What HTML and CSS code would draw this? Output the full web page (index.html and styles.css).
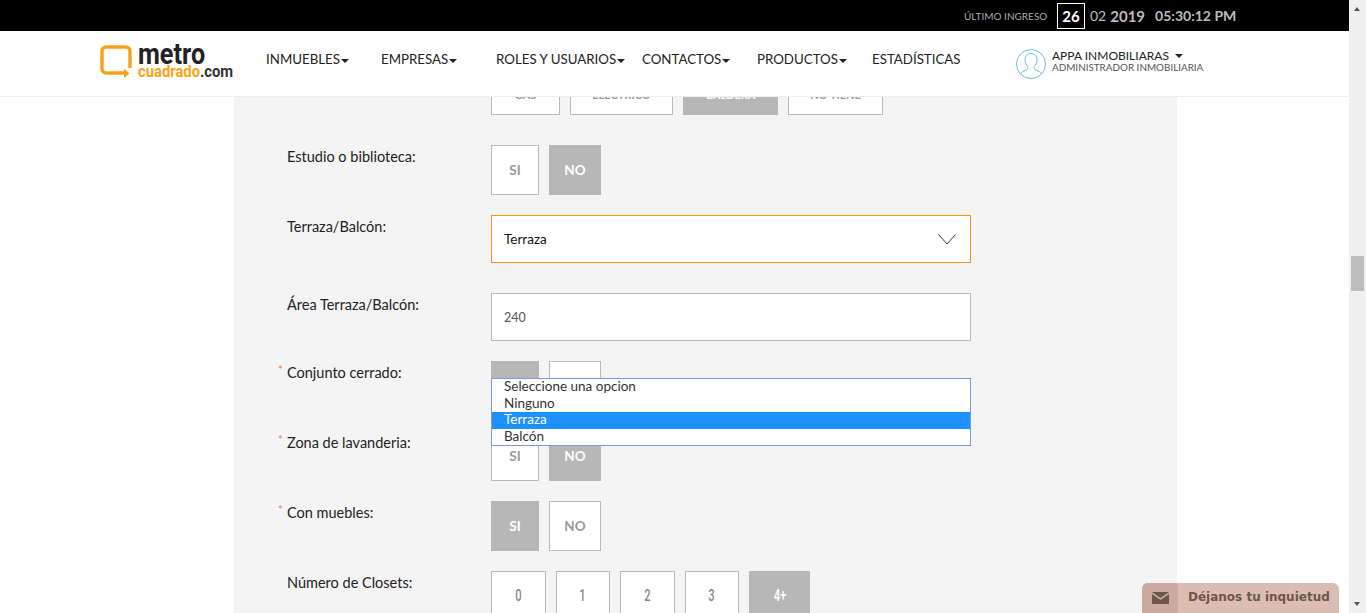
FILE: index.html
```html
<!DOCTYPE html>
<html lang="es">
<head>
    <meta charset="UTF-8">
    <title>Metro Cuadrado</title>
    <link rel="stylesheet" href="styles.css">
</head>
<body>
    <div class="page">
        <div class="topbar">
            <span class="last-label">ÚLTIMO INGRESO</span>
            <span class="day">26</span>
            <span class="month">02</span>
            <span class="year">2019</span>
            <span class="time">05:30:12 PM</span>
        </div>

        <header class="header">
            <a class="logo">
                <svg class="logo-mark" width="33" height="33" viewBox="0 0 33 33">
                    <path d="M3 24V6a4 4 0 0 1 4-4h20a4 4 0 0 1 4 4v17" fill="none" stroke="#f9a11b" stroke-width="3.4"/>
                    <path d="M3 24a4 4 0 0 0 4 4h20" fill="none" stroke="#f9a11b" stroke-width="3.4"/>
                    <path d="M25 23.500l5.500 5-5.500 4.500z" fill="#f9a11b"/>
                </svg>
                <span class="logo-text">
                    <span class="logo-metro">metro</span>
                    <span class="logo-sub"><span class="logo-cuadrado">cuadrado</span>.com</span>
                </span>
            </a>
            <nav class="nav">
                <a>INMUEBLES<i class="caret"></i></a>
                <a>EMPRESAS<i class="caret"></i></a>
                <a>ROLES Y USUARIOS<i class="caret"></i></a>
                <a>CONTACTOS<i class="caret"></i></a>
                <a>PRODUCTOS<i class="caret"></i></a>
                <a>ESTADÍSTICAS</a>
            </nav>
            <div class="user">
                <svg width="32" height="32" viewBox="0 0 32 32" fill="none" stroke="#6dbbdd" stroke-width="1">
                    <circle cx="16" cy="16" r="14.500"/>
                    <path d="M5.500 26c1-2.500 3.500-3 6-4 1.500-.6 1.800-2 1-3.500-1.500-2-2.500-4-2.500-7 0-3.500 2.500-6 6-6s6 2.500 6 6c0 3-1 5-2.500 7-.8 1.500-.5 2.900 1 3.500 2.500 1 5 1.500 6 4"/>
                </svg>
                <div class="user-text">
                    <div class="user-name">APPA INMOBILIARAS<i class="caret caret-user"></i></div>
                    <div class="user-role">ADMINISTRADOR INMOBILIARIA</div>
                </div>
            </div>
        </header>

        <main class="main">
            <section class="panel">
                <div class="row row-cut">
                    <div class="label"></div>
                    <div class="options">
                        <span class="opt opt-gas">GAS</span>
                        <span class="opt opt-electrico">ELECTRICO</span>
                        <span class="opt opt-caldera active">CALDERA</span>
                        <span class="opt opt-notiene">NO TIENE</span>
                    </div>
                </div>

                <div class="row">
                    <div class="label">Estudio o biblioteca:</div>
                    <div class="options">
                        <span class="opt opt-si">SI</span>
                        <span class="opt opt-no active">NO</span>
                    </div>
                </div>

                <div class="row row-wide">
                    <div class="label">Terraza/Balcón:</div>
                    <div class="select">
                        <span>Terraza</span>
                        <svg width="18" height="11" viewBox="0 0 18 11" fill="none" stroke="#333" stroke-width="1">
                            <path d="M.5.500 9 10 17.500.500"/>
                        </svg>
                    </div>
                </div>

                <div class="row">
                    <div class="label">Área Terraza/Balcón:</div>
                    <input class="field" type="text" value="240">
                </div>

                <div class="row">
                    <div class="label required">Conjunto cerrado:</div>
                    <div class="options">
                        <span class="opt opt-si active">SI</span>
                        <span class="opt opt-no">NO</span>
                        <ul class="dropdown">
                            <li>Seleccione una opcion</li>
                            <li>Ninguno</li>
                            <li class="selected">Terraza</li>
                            <li>Balcón</li>
                        </ul>
                    </div>
                </div>

                <div class="row">
                    <div class="label required">Zona de lavanderia:</div>
                    <div class="options">
                        <span class="opt opt-si">SI</span>
                        <span class="opt opt-no active">NO</span>
                    </div>
                </div>

                <div class="row">
                    <div class="label required">Con muebles:</div>
                    <div class="options">
                        <span class="opt opt-si active">SI</span>
                        <span class="opt opt-no">NO</span>
                    </div>
                </div>

                <div class="row">
                    <div class="label">Número de Closets:</div>
                    <div class="options numbers">
                        <span class="opt opt-n"><b>0</b></span>
                        <span class="opt opt-n"><b>1</b></span>
                        <span class="opt opt-n"><b>2</b></span>
                        <span class="opt opt-n"><b>3</b></span>
                        <span class="opt opt-more active"><b>4+</b></span>
                    </div>
                </div>
            </section>
        </main>
    </div>

    <div class="scrollbar">
        <span class="arrow-up"></span>
        <span class="thumb"></span>
        <span class="arrow-down"></span>
    </div>

    <div class="feedback">
        <span class="feedback-icon">
            <svg width="17" height="12" viewBox="0 0 17 12">
                <path d="M0 0h17L8.500 6z" fill="#6b5750"/>
                <path d="M0 2l8.500 6L17 2v10H0z" fill="#6b5750"/>
            </svg>
        </span>
        <span class="feedback-text">Déjanos tu inquietud</span>
    </div>
</body>
</html>
```

FILE: styles.css
```css
html, body {
    height: 100%;
}

body {
    margin: 0;
    display: flex;
    overflow: hidden;
    font-family: "Lato", "Liberation Sans", sans-serif;
    color: #222;
    background: #fff;
}

.page {
    flex: 1;
    min-width: 0;
    display: flex;
    flex-direction: column;
}

/* barra negra */
.topbar {
    height: 31px;
    flex: none;
    background: #000;
    color: #bbb;
    display: flex;
    align-items: center;
    padding-left: 964px;
    box-sizing: border-box;
}

.last-label {
    font-size: 10px;
    width: 93px;
    color: #aaa;
}

.day {
    width: 28px;
    height: 26px;
    box-sizing: border-box;
    border: 1px solid #fff;
    color: #fff;
    font-size: 15px;
    font-weight: 700;
    text-align: center;
    line-height: 24px;
    margin-right: 5px;
}

.month {
    font-size: 14px;
    margin-right: 4px;
}

.year {
    font-size: 15px;
    font-weight: 700;
    margin-right: 10px;
}

.time {
    font-size: 14px;
    font-weight: 700;
}

/* cabecera */
.header {
    height: 66px;
    flex: none;
    box-sizing: border-box;
    border-bottom: 1px solid #eee;
    display: flex;
    align-items: center;
    padding-left: 99px;
}

.logo {
    width: 167px;
    flex: none;
    display: flex;
    gap: 6px;
    align-items: center;
    margin-top: -5px;
}

.logo-text {
    display: flex;
    flex-direction: column;
    font-family: "Roboto", sans-serif;
    font-weight: 700;
    transform: scaleX(.87);
    transform-origin: left;
    white-space: nowrap;
}

.logo-metro {
    font-size: 29px;
    line-height: 20px;
    color: #222;
}

.logo-sub {
    font-size: 17px;
    line-height: 14px;
    color: #333;
}

.logo-cuadrado {
    color: #f9a11b;
}

.nav {
    display: grid;
    grid-template-columns: 115px 115px 146px 115px 115px 144px;
    font-size: 13.300px;
    margin-top: -9px;
}

.nav a {
    white-space: nowrap;
}

.caret {
    display: inline-block;
    margin-left: 1px;
    vertical-align: middle;
    border-top: 4px solid #222;
    border-left: 4px solid transparent;
    border-right: 4px solid transparent;
}

.user {
    display: flex;
    align-items: center;
    gap: 5px;
    margin-left: -1px;
}

.user-text {
    margin-top: -5px;
}

.user-name {
    font-size: 12px;
    line-height: 12px;
}

.caret-user {
    margin-left: 6px;
    vertical-align: 2px;
}

.user-role {
    font-size: 9.900px;
    line-height: 10px;
    color: #555;
}

/* formulario */
.main {
    flex: 1;
    min-height: 0;
    overflow: hidden;
    padding-left: 234px;
}

.panel {
    width: 943px;
    box-sizing: border-box;
    background: #f4f4f4;
    padding-left: 53px;
    height: 100%;
    overflow: hidden;
}

.row {
    display: flex;
    margin-bottom: 20px;
}

.row-cut {
    height: 18px;
    margin-bottom: 30px;
    align-items: flex-end;
    overflow: hidden;
}

.row-cut .opt {
    padding-top: 10px;
}

.row-wide {
    margin-bottom: 30px;
}

.label {
    width: 204px;
    flex: none;
    position: relative;
    font-size: 14.500px;
    line-height: 24px;
}

.required::before {
    content: "*";
    position: absolute;
    left: -9px;
    top: -3px;
    font-size: 11px;
    color: #f0764a;
}

.options {
    display: flex;
    gap: 10px;
    position: relative;
    flex: none;
}

.opt {
    height: 50px;
    box-sizing: border-box;
    border: 1px solid #b9b9b9;
    padding-bottom: 1px;
    background: #fff;
    color: #999;
    font-size: 13.500px;
    font-weight: 700;
    display: flex;
    align-items: center;
    justify-content: center;
}

.opt.active {
    background: #b7b7b7;
    border-color: #b7b7b7;
    color: #fff;
}

.opt-si { width: 48px; }
.opt-no { width: 52px; }
.opt-gas { width: 69px; font-size: 11px; }
.opt-electrico { width: 103px; font-size: 11px; }
.opt-caldera { width: 95px; font-size: 11px; }
.opt-notiene { width: 95px; font-size: 11px; }

.numbers .opt {
    font-family: "Roboto", sans-serif;
    font-size: 16px;
    color: #888;
}

.numbers .opt.active {
    color: #fff;
}

.numbers b {
    font-weight: 500;
    transform: scaleX(.7);
}

.opt-n { width: 54.500px; }
.opt-more { width: 61px; }

.select, .field {
    width: 480px;
    height: 48px;
    box-sizing: border-box;
    background: #fff;
    font-family: inherit;
    padding: 0 14px 0 12px;
}

.select {
    border: 1px solid #f39322;
    display: flex;
    align-items: center;
    justify-content: space-between;
    font-size: 13.500px;
    color: #111;
}

.select span {
    margin-bottom: 1px;
}

.field {
    border: 1px solid #b9b9b9;
    font-size: 12.500px;
    color: #555;
    outline: none;
}

/* lista abierta del select */
.dropdown {
    list-style: none;
    position: absolute;
    z-index: 5;
    left: 0;
    top: 17px;
    width: 480px;
    box-sizing: border-box;
    margin: 0;
    padding: 0;
    background: #fff;
    border: 1px solid #7a9cd9;
    font-size: 13.500px;
    color: #333;
}

.dropdown li {
    height: 16.500px;
    line-height: 15px;
    padding-left: 12px;
}

.dropdown .selected {
    background: #1e90ff;
    color: #fff;
}

/* scroll */
.scrollbar {
    width: 17px;
    flex: none;
    background: #f0f0f0;
    position: relative;
}

.thumb {
    position: absolute;
    left: 2px;
    top: 256px;
    width: 13px;
    height: 35px;
    background: #bdbdbd;
}

.arrow-up, .arrow-down {
    position: absolute;
    left: 5px;
    border-left: 3.500px solid transparent;
    border-right: 3.500px solid transparent;
}

.arrow-up {
    top: 7px;
    border-bottom: 4px solid #555;
}

.arrow-down {
    bottom: 7px;
    border-top: 4px solid #555;
}

/* boton flotante */
.feedback {
    position: fixed;
    left: 1142px;
    bottom: 0;
    width: 197px;
    height: 30px;
    display: flex;
    align-items: center;
    background: #dcbdb1;
    border-radius: 6px 6px 0 0;
    overflow: hidden;
}

.feedback-icon {
    width: 36px;
    height: 100%;
    background: #cbab9f;
    display: flex;
    align-items: center;
    justify-content: center;
}

.feedback-text {
    margin-left: 10px;
    margin-bottom: 2px;
    font-family: "DejaVu Sans", sans-serif;
    font-size: 12px;
    font-weight: 700;
    color: #6b5750;
}
```
